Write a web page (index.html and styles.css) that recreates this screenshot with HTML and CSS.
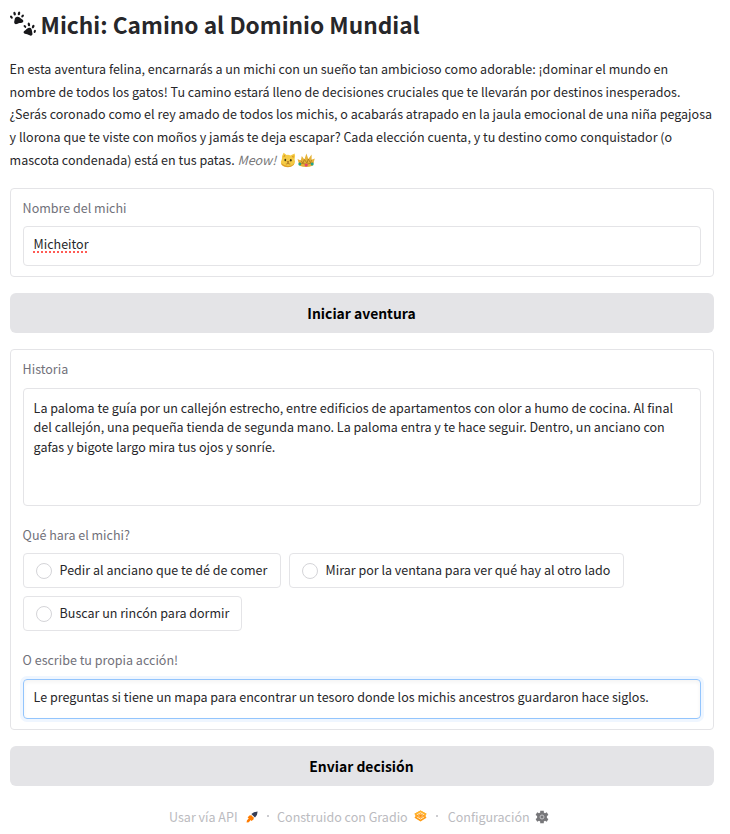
FILE: index.html
```html
<!DOCTYPE html>
<html lang="es">
<head>
<meta charset="utf-8">
<title>Michi: Camino al Dominio Mundial</title>
<link rel="stylesheet" href="styles.css">
</head>
<body>
<main class="app">
  <h1 class="title">
    <svg class="paws" viewBox="0 0 26 26" aria-hidden="true">
      <ellipse cx="1.4" cy="6.2" rx="1.1" ry="1.7" transform="rotate(-35 1.4 6.2)"/>
      <ellipse cx="4.6" cy="2.6" rx="1.2" ry="1.9" transform="rotate(-15 4.6 2.6)"/>
      <ellipse cx="9" cy="2.4" rx="1.2" ry="1.9" transform="rotate(12 9 2.4)"/>
      <ellipse cx="12.6" cy="5" rx="1.1" ry="1.6" transform="rotate(40 12.6 5)"/>
      <path d="M7 5.8C8.7 5.4 9.8 6.6 10.9 7.6C12.3 8.7 13.6 9 13.3 10.5C13 12 11.2 11.7 9.5 12.1C7.9 12.5 6 13.9 4.8 12.8C3.6 11.6 4.5 10.2 4.6 8.8C4.8 7.3 5.4 6.1 7 5.8Z"/>
      <ellipse cx="14.9" cy="15.4" rx="1.1" ry="1.6" transform="rotate(-40 14.9 15.4)"/>
      <ellipse cx="18.9" cy="13.4" rx="1.2" ry="1.9" transform="rotate(-12 18.9 13.4)"/>
      <ellipse cx="23.2" cy="15.6" rx="1.2" ry="1.9" transform="rotate(25 23.2 15.6)"/>
      <ellipse cx="24.8" cy="20.4" rx="1" ry="1.6" transform="rotate(20 24.8 20.4)"/>
      <path d="M19.6 16.7C21.3 16.9 21.9 18.4 22 20C22.1 21.6 23.1 23.3 21.9 24.3C20.6 25.4 18.9 23.8 17.3 23.3C15.7 22.8 13.8 23.1 13.6 21.6C13.3 20.1 14.8 19.8 15.9 18.7C17 17.6 17.9 16.5 19.6 16.7Z"/>
    </svg>
    <span>Michi: Camino al Dominio Mundial</span>
  </h1>
  <p class="intro">En esta aventura felina, encarnarás a un michi con un sueño tan ambicioso como adorable: ¡dominar el mundo en<br>nombre de todos los gatos! Tu camino estará lleno de decisiones cruciales que te llevarán por destinos inesperados.<br>¿Serás coronado como el rey amado de todos los michis, o acabarás atrapado en la jaula emocional de una niña pegajosa<br>y llorona que te viste con moños y jamás te deja escapar? Cada elección cuenta, y tu destino como conquistador (o<br>mascota condenada) está en tus patas. <em>Meow!</em>
    <svg class="emoji" viewBox="0 0 35 16" aria-hidden="true">
      <path d="M3.6 .8L6.6 3Q8.6 2.6 10.4 3.4L14.6 1.6Q15.8 4.5 14.6 7.2Q15.8 10 14 12.3Q11.8 15 7.8 14.9Q3.4 14.8 1.4 12.2Q.2 10 1.9 7Q1.8 3.4 3.6 .8Z" fill="#f5cb45"/>
      <path d="M4.1 2.7L5.7 4L3.3 5.6ZM13.7 3.3L11.7 4.4L13.6 6.2Z" fill="#d99a22"/>
      <path d="M1.2 11Q4.4 14 8 14Q12 14 14.5 11L13.7 13Q11 15.3 8 15.3Q3.4 15.2 1.6 12.8Z" fill="#dfa028"/>
      <ellipse cx="5.3" cy="8" rx=".9" ry="1.2" fill="#463d13"/><ellipse cx="10.8" cy="8.2" rx=".9" ry="1.2" fill="#463d13"/>
      <path d="M7 9.6H9L8 10.7ZM5.8 12Q8 12.5 8 10.7Q8 12.5 10.3 12" stroke="#98601c" stroke-width=".6" fill="#98601c" fill-opacity=".3"/>
      <path d="M17.5 7L20.8 8.6L21.8 4L24.4 7.5L26.4 1.6L28.3 7L31.6 2.4L31.6 7.8L34.8 6.4L32.6 13.8Q26 16.4 19.5 13.8Z" fill="#e6b338"/>
      <path d="M19 10.8Q26 13.6 33.5 10.8M20.8 8.6L23 11L24.4 7.5L27 11L28.3 7L30.5 11L31.6 7.8" stroke="#a9771d" stroke-width=".8" fill="none"/>
      <circle cx="19.8" cy="12" r="1.5" fill="#20a58a"/><circle cx="26.2" cy="13" r="1.6" fill="#e5456f"/><circle cx="32.2" cy="12" r="1.5" fill="#20a58a"/>
    </svg></p>

  <section class="panel panel-name">
    <div class="label">Nombre del michi</div>
    <div class="field"><span class="misspelled">Micheitor</span></div>
  </section>

  <button class="action">Iniciar aventura</button>

  <section class="panel panel-story">
    <div class="label label-story">Historia</div>
    <div class="story">La paloma te guía por un callejón estrecho, entre edificios de apartamentos con olor a humo de cocina. Al final<br>del callejón, una pequeña tienda de segunda mano. La paloma entra y te hace seguir. Dentro, un anciano con<br>gafas y bigote largo mira tus ojos y sonríe.</div>
    <div class="label label-choice">Qué hara el michi?</div>
    <div class="options">
      <div class="option first"><i class="radio"></i>Pedir al anciano que te dé de comer</div>
      <div class="option second"><i class="radio"></i>Mirar por la ventana para ver qué hay al otro lado</div>
      <div class="option third"><i class="radio"></i>Buscar un rincón para dormir</div>
    </div>
    <div class="label label-own">O escribe tu propia acción!</div>
    <div class="field focused">Le preguntas si tiene un mapa para encontrar un tesoro donde los michis ancestros guardaron hace siglos.</div>
  </section>

  <button class="action">Enviar decisión</button>

  <footer class="footer">
    <span>Usar vía API</span>
    <svg class="rocket" viewBox="0 0 12 12" aria-hidden="true"><path d="M5.4 3L8 1.2L11.6 .4L10.9 4L9 6.6L7.4 5Z" fill="#343c55"/><path d="M3.4 4.6L5.4 4.3L6.4 5.6L7.8 6.6L7.5 8.4L5.4 10L4.7 9L2.8 11.2L.6 11.6L.9 9.4L2.8 7.2L1.6 6.4Z" fill="#ff7c00"/></svg>
    <span class="dot"></span>
    <span>Construido con Gradio</span>
    <svg class="gradio" viewBox="0 0 13 12" aria-hidden="true"><path d="M6.5 .5L12.5 3.8L11.4 5.9L12.5 7.8L6.5 11.4L.5 7.8L1.6 5.9L.5 3.8Z" fill="#ff9c16"/><path d="M.5 3.8L6.5 .5L12.5 3.8L11.4 5.4L9.6 4.2L6.5 2.5L3.4 4.2L1.6 5.4Z" fill="#ffb52d"/><path d="M2.8 4.8L6.5 2.8L10.2 4.8M2.8 6.9L6.5 9.1L10.2 6.9" stroke="#fff1d5" stroke-width=".9" fill="none"/><ellipse cx="6.5" cy="5.9" rx="2" ry="1.3" fill="#ff8400" stroke="#ffe1a8" stroke-width=".6"/></svg>
    <span class="dot"></span>
    <span>Configuración</span>
    <svg class="gear" viewBox="0 0 14 14" aria-hidden="true"><path d="M5.2 .8H8.8V2.5L10 3.2L11.8 2.3L13.4 5L11.9 6V8L13.4 9L11.8 11.7L10 10.8L8.8 11.5V13.2H5.2V11.5L4 10.8L2.2 11.7L.6 9L2.1 8V6L.6 5L2.2 2.3L4 3.2L5.2 2.5Z" fill="#77777a"/><circle cx="7" cy="7" r="2" fill="#77777a" stroke="#c4c4c7" stroke-width="1"/></svg>
  </footer>
</main>
</body>
</html>
```
FILE: styles.css
```css
* { box-sizing: border-box; }
body {
  margin: 0;
  background: #fff;
  color: #27272a;
  font-family: "Noto Sans CJK SC", "Noto Sans", sans-serif;
  font-size: 12.53px;
  white-space: nowrap;
}
.app { width: 704px; margin-left: 10px; padding-top: 6px; }
.title { display: flex; align-items: center; gap: 4.6px; margin: 0; height: 38px; font-size: 22.7px; line-height: 38px; font-weight: 700; }
.paws { width: 26px; height: 26px; margin-top: -2px; fill: #18181b; }
.intro { margin: 14px 0 0 -.4px; height: 114px; line-height: 22.7px; }
.intro em { color: #777779; }
.emoji { width: 35px; height: 16px; vertical-align: -3px; margin-left: 1px; }
.panel { border: 1px solid #e4e4e7; border-radius: 4px; padding: 0 12px; }
.panel-name { height: 89px; margin-top: 16px; }
.label { color: #71717a; height: 20px; line-height: 20px; margin: 9px 0 8px; text-indent: -.4px; }
.label-story { margin-bottom: 9px; }
.field { height: 40px; border: 1px solid #e4e4e7; border-radius: 4px; padding: 0 9.6px; line-height: 34px; }
.misspelled { text-decoration: underline dotted #ff5b55 2px; text-underline-offset: 2px; }
.action { display: block; width: 100%; height: 40px; margin: 16px 0; padding: 0 1px 0 0; border: 0; border-radius: 6px; background: #e4e4e7; color: #000; font: 700 13.9px/40px "Noto Sans CJK SC", sans-serif; }
.panel-story { height: 381px; }
.story { height: 118px; border: 1px solid #e4e4e7; border-radius: 4px; padding: 9px 9.6px; line-height: 19.4px; }
.label-choice { margin: 19px 0 8px; }
.options { display: flex; flex-wrap: wrap; gap: 8px; }
.option { display: flex; align-items: center; gap: 7.6px; height: 35px; border: 1px solid #e4e4e7; border-radius: 4px; padding: 0 12px 2px; }
.first { width: 258px; }
.second { width: 335px; }
.third { width: 219px; }
.radio { flex: none; width: 16px; height: 16px; margin-top: 2px; border: 1px solid #d4d4d8; border-radius: 50%; }
.label-own { margin: 19px 0 9px; }
.focused { border-color: #93c5fd; box-shadow: 0 0 0 3px #eff6ff, inset 0 2px 4px rgba(0, 0, 0, .05); }
.footer { display: flex; align-items: center; height: 20px; margin: 20px 0 0 159px; color: #bbbbc0; }
.rocket { width: 12px; height: 12px; margin: 2px 0 0 8.5px; }
.dot { width: 2px; height: 2px; margin: 0 8.5px; border-radius: 1px; background: #bbbbc0; }
.gradio { width: 13px; height: 12px; margin: 0 0 0 6px; }
.gradio + .dot { margin: 0 9.5px; }
.gear { width: 14px; height: 14px; margin: 2px 0 0 5px; }
```
